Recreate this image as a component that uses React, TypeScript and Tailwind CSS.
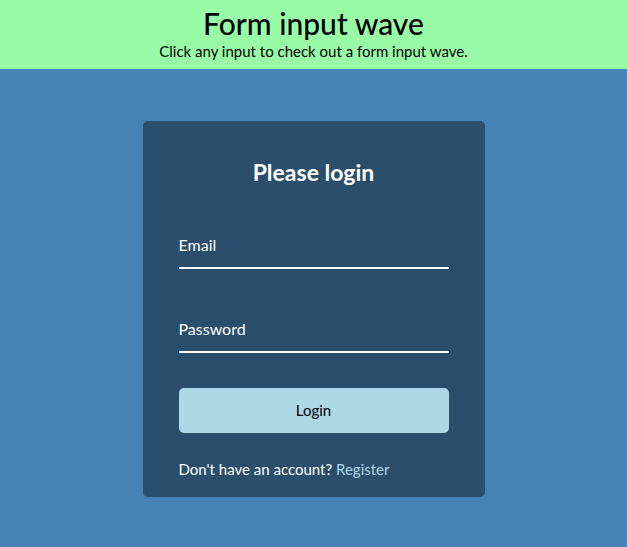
import React from 'react';

const LoginCard: React.FC = () => {
  return (
    <div className="w-[342px] rounded-[5px] bg-[#2a4e6c] px-[36px] pt-[35px] pb-[16px] text-white">
      <h1 className="text-center text-[23px] font-bold leading-[32px]">Please login</h1>

      <form className="mt-[34px]" onSubmit={(e) => e.preventDefault()}>
        <div className="relative">
          <input
            type="text"
            required
            className="block h-[47px] w-full border-b-2 border-white bg-transparent text-[18px] text-white outline-none"
          />
          <label className="pointer-events-none absolute left-0 top-[11px] text-[16px] leading-[24px]">Email</label>
        </div>

        <div className="relative mt-[37px]">
          <input
            type="password"
            required
            className="block h-[47px] w-full border-b-2 border-white bg-transparent text-[18px] text-white outline-none"
          />
          <label className="pointer-events-none absolute left-0 top-[11px] text-[16px] leading-[24px]">Password</label>
        </div>

        <button
          type="submit"
          className="mt-[35px] block h-[45px] w-full rounded-[5px] bg-[#add8e6] text-[15px] text-black"
        >
          Login
        </button>

        <p className="mt-[24px] text-[15px] leading-[24px]">
          Don't have an account? <a href="#" className="text-[#add8e6]">Register</a>
        </p>
      </form>
    </div>
  );
};

export default function App() {
  return (
    <div className="flex h-[547px] flex-col bg-[#4682b4] font-['Lato',sans-serif]">
      <header className="bg-[#98fca6] pt-[6px] pb-[8px] text-center text-black">
        <h2 className="text-[30px] font-medium leading-[35px]">Form input wave</h2>
        <p className="text-[15px] leading-[20px]">Click any input to check out a form input wave.</p>
      </header>
      <main className="flex flex-1 items-center justify-center pt-[2px]">
        <LoginCard />
      </main>
    </div>
  );
}
